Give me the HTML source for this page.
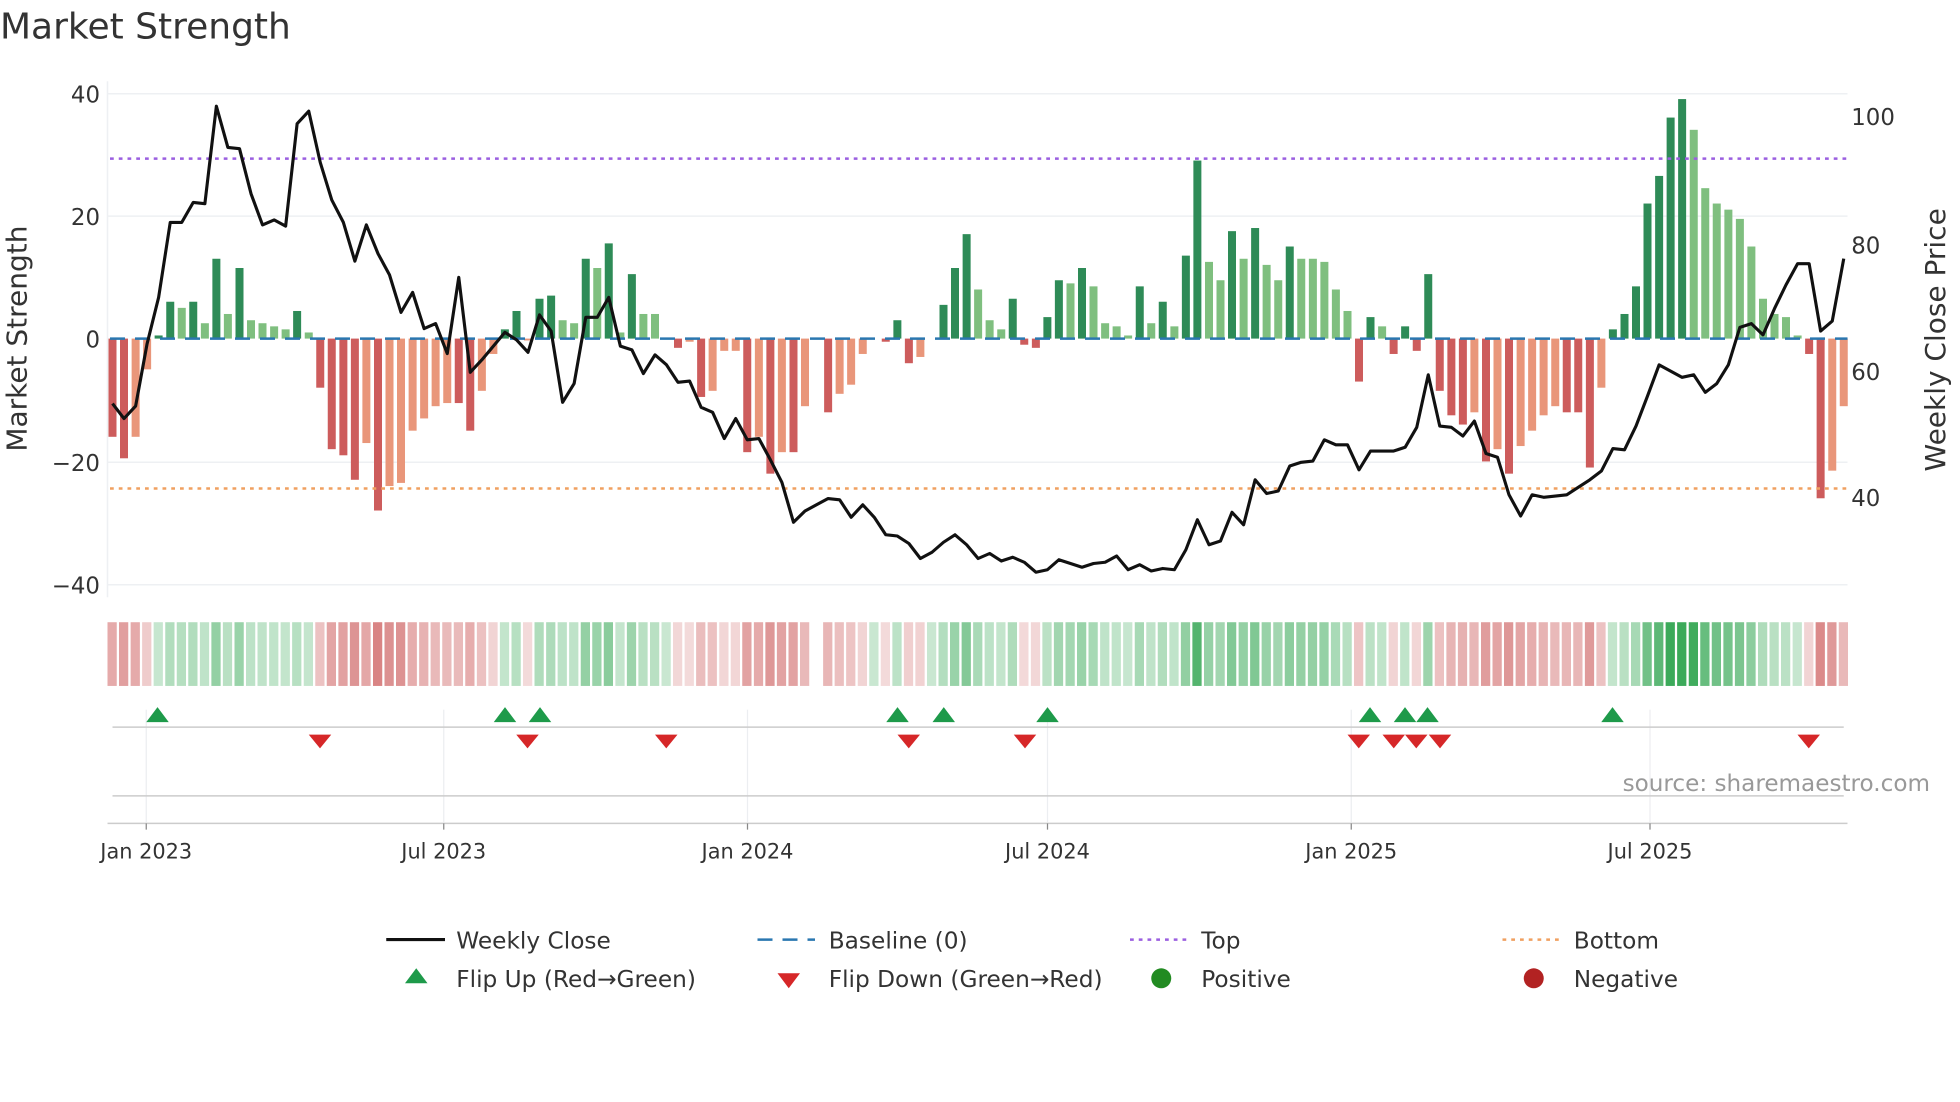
<!DOCTYPE html>
<html><head><meta charset="utf-8"><style>
html,body{margin:0;padding:0;background:#fff;width:1960px;height:1102px;overflow:hidden}
svg{display:block;font-family:"DejaVu Sans","Liberation Sans",sans-serif}
</style></head><body>
<svg id="s" width="1960" height="1102" viewBox="0 0 1568 882" preserveAspectRatio="none" xmlns="http://www.w3.org/2000/svg">
<rect width="1568" height="882" fill="#fff"/>
<text x="0" y="31" font-size="28.8" fill="#333">Market Strength</text>
<g stroke="#eef0f3" stroke-width="1.2">
<line x1="86" y1="75" x2="1478" y2="75"/><line x1="86" y1="173" x2="1478" y2="173"/><line x1="86" y1="370" x2="1478" y2="370"/><line x1="86" y1="468" x2="1478" y2="468"/>
<line x1="86" y1="65" x2="86" y2="478"/>
</g>
<g font-size="18.3" fill="#333" text-anchor="end">
<text x="80" y="82">40</text><text x="80" y="180">20</text><text x="80" y="278">0</text><text x="80" y="377">−20</text><text x="80" y="475">−40</text>
</g>
<g font-size="18.3" fill="#333">
<text x="1481" y="100">100</text><text x="1481" y="203">80</text><text x="1481" y="304">60</text><text x="1481" y="405">40</text>
</g>
<text transform="translate(21,271) rotate(-90)" font-size="22.4" fill="#333" text-anchor="middle">Market Strength</text>
<text transform="translate(1556,272) rotate(-90)" font-size="22.4" fill="#333" text-anchor="middle">Weekly Close Price</text>
<g id="bars"></g>
<line x1="88" y1="271" x2="1478" y2="271" stroke="#2a77b0" stroke-width="2" stroke-dasharray="12,8"/>
<line x1="88" y1="127" x2="1478" y2="127" stroke="#9b5fe0" stroke-width="2" stroke-dasharray="3,4"/>
<line x1="88" y1="391" x2="1478" y2="391" stroke="#f0a060" stroke-width="2" stroke-dasharray="3,4"/>
<polyline id="pl" points="0,0" fill="none" stroke="#111" stroke-width="2.5" stroke-linejoin="round"/>
<g id="strip"></g>
<g stroke="#eceef1" stroke-width="1">
<line x1="117" y1="568" x2="117" y2="658"/><line x1="355" y1="568" x2="355" y2="658"/><line x1="598" y1="568" x2="598" y2="658"/><line x1="838" y1="568" x2="838" y2="658"/><line x1="1081" y1="568" x2="1081" y2="658"/><line x1="1320" y1="568" x2="1320" y2="658"/>
</g>
<line x1="90" y1="582" x2="1475" y2="582" stroke="#ccc" stroke-width="1.2"/>
<line x1="90" y1="637" x2="1475" y2="637" stroke="#ccc" stroke-width="1.2"/>
<line x1="86" y1="659" x2="1478" y2="659" stroke="#ccc" stroke-width="1.2"/>
<g id="mk"></g>
<g stroke="#888" stroke-width="1"><line x1="117" y1="659" x2="117" y2="664"/><line x1="355" y1="659" x2="355" y2="664"/><line x1="598" y1="659" x2="598" y2="664"/><line x1="838" y1="659" x2="838" y2="664"/><line x1="1081" y1="659" x2="1081" y2="664"/><line x1="1320" y1="659" x2="1320" y2="664"/></g>
<g font-size="16.7" fill="#333" text-anchor="middle">
<text x="117" y="687">Jan 2023</text><text x="355" y="687">Jul 2023</text><text x="598" y="687">Jan 2024</text><text x="838" y="687">Jul 2024</text><text x="1081" y="687">Jan 2025</text><text x="1320" y="687">Jul 2025</text>
</g>
<text x="1544" y="633" font-size="18.5" fill="#999" text-anchor="end">source: sharemaestro.com</text>
<g font-size="18.6" fill="#333">
<line x1="309" y1="752" x2="356" y2="752" stroke="#111" stroke-width="2.5"/><text x="365" y="759">Weekly Close</text>
<line x1="606" y1="752" x2="652" y2="752" stroke="#2a77b0" stroke-width="2" stroke-dasharray="12,8"/><text x="663" y="759">Baseline (0)</text>
<line x1="904" y1="752" x2="950" y2="752" stroke="#9b5fe0" stroke-width="2" stroke-dasharray="3,4"/><text x="961" y="759">Top</text>
<line x1="1202" y1="752" x2="1248" y2="752" stroke="#f0a060" stroke-width="2" stroke-dasharray="3,4"/><text x="1259" y="759">Bottom</text>
<polygon points="333,775 324,787 342,787" fill="#1e9a4a"/><text x="365" y="790">Flip Up (Red→Green)</text>
<polygon points="622,779 640,779 631,791" fill="#d62728"/><text x="663" y="790">Flip Down (Green→Red)</text>
<circle cx="929" cy="783" r="8" fill="#228b22"/><text x="961" y="790">Positive</text>
<circle cx="1227" cy="783" r="8" fill="#b22222"/><text x="1259" y="790">Negative</text>
</g>
</svg>
<script>
(function(){
var NS="http://www.w3.org/2000/svg";
function el(parent,tag,attrs){var e=document.createElementNS(NS,tag);for(var k in attrs){e.setAttribute(k,attrs[k]);}parent.appendChild(e);return e;}
var B=[[-16,1],[-19.5,1],[-16,0],[-5,0],[0.5,1],[6,1],[5,0],[6,1],[2.5,0],[13,1],[4,0],[11.5,1],[3,0],[2.5,0],[2,0],[1.5,0],[4.5,1],[1,0],[-8,1],[-18,1],[-19,1],[-23,1],[-17,0],[-28,1],[-24,0],[-23.5,0],[-15,0],[-13,0],[-11,0],[-10.5,0],[-10.5,1],[-15,1],[-8.5,0],[-2.5,0],[1.5,1],[4.5,1],[-0.3,0],[6.5,1],[7,1],[3,0],[2.5,0],[13,1],[11.5,0],[15.5,1],[1,0],[10.5,1],[4,0],[4,0],[0,0],[-1.5,1],[-0.5,0],[-9.5,1],[-8.5,0],[-2,0],[-2,0],[-18.5,1],[-16,0],[-22,1],[-18.5,0],[-18.5,1],[-11,0],[999,0],[-12,1],[-9,0],[-7.5,0],[-2.5,0],[0,0],[-0.5,1],[3,1],[-4,1],[-3,0],[0,0],[5.5,1],[11.5,1],[17,1],[8,0],[3,0],[1.5,0],[6.5,1],[-1,1],[-1.5,1],[3.5,1],[9.5,1],[9,0],[11.5,1],[8.5,0],[2.5,0],[2,0],[0.5,0],[8.5,1],[2.5,0],[6,1],[2,0],[13.5,1],[29,1],[12.5,0],[9.5,0],[17.5,1],[13,0],[18,1],[12,0],[9.5,0],[15,1],[13,0],[13,0],[12.5,0],[8,0],[4.5,0],[-7,1],[3.5,1],[2,0],[-2.5,1],[2,1],[-2,1],[10.5,1],[-8.5,1],[-12.5,1],[-14,1],[-12,0],[-20,1],[-18,0],[-22,1],[-17.5,0],[-15,0],[-12.5,0],[-11,0],[-12,1],[-12,1],[-21,1],[-8,0],[1.5,1],[4,1],[8.5,1],[22,1],[26.5,1],[36,1],[39,1],[34,0],[24.5,0],[22,0],[21,0],[19.5,0],[15,0],[6.5,0],[4,0],[3.5,0],[0.5,0],[-2.5,1],[-26,1],[-21.5,0],[-11,0]];
var P=[323,335,325,275,238,178,178,162,163,85,118,119,155,180,176,181,99,89,130,160,178,209,180,203,220,250,234,263,259,283,222,298,288,277,266,272,282,252,265,322,307,254,254,238,277,280,299,284,292,306,305,326,330,351,335,352,351,368,386,418,409,404,399,400,414,404,414,428,429,435,447,442,434,428,436,447,443,449,446,450,458,456,448,451,454,451,450,445,456,452,457,455,456,440,416,436,433,410,420,384,395,393,373,370,369,352,356,356,376,361,361,361,358,342,300,341,342,349,337,363,366,396,413,396,398,397,396,390,384,377,359,360,341,317,292,297,302,300,314,307,292,262,259,268,247,228,211,211,265,257,207];
var n=B.length,st=(1475-90)/(n-1),pts=[];
var gb=document.getElementById("bars"),gs=document.getElementById("strip"),gm=document.getElementById("mk");
for(var i=0;i<n;i++){
 var x=90+st*i,v=B[i][0],d=B[i][1];
 if(i<P.length)pts.push(x.toFixed(1)+","+P[i]);
 if(v===999)continue;
 var y=271-v*4.915,top=Math.min(y,271),h=Math.abs(y-271);
 var c=v>=0?(d?"#2e8b57":"#7fbf7f"):(d?"#cd5c5c":"#e9967a");
 if(h>0.3)el(gb,"rect",{x:(x-3.2).toFixed(1),y:top.toFixed(1),width:"6.4",height:h.toFixed(1),fill:c});
 var sc,op;
 if(v>=0){sc="#3caa5a";op=0.28+Math.min(1,v/35)*0.72;}else{sc="#cd5f5f";op=0.22+Math.min(1,-v/28)*0.55;}
 el(gs,"rect",{x:(x-4).toFixed(1),y:"498",width:"7.4",height:"51",fill:sc,"fill-opacity":op.toFixed(2)});
}
document.getElementById("pl").setAttribute("points",pts.join(" "));
var U=[126,404,432,718,755,838,1096,1124,1142,1290],D=[256,422,533,727,820,1087,1115,1133,1152,1447];
for(var j=0;j<U.length;j++){var a=U[j];el(gm,"polygon",{points:a+",566 "+(a-9)+",578 "+(a+9)+",578",fill:"#1e9a4a"});}
for(var k=0;k<D.length;k++){var b=D[k];el(gm,"polygon",{points:(b-9)+",588 "+(b+9)+",588 "+b+",599",fill:"#d62728"});}
})();
</script>
</body></html>
